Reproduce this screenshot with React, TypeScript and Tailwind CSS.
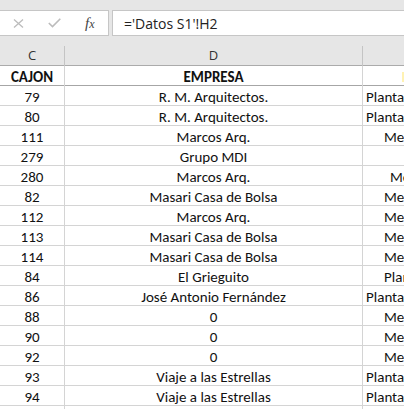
const rows: [string, string, string, string][] = [
  ['79', 'R. M. Arquitectos.', 'Planta', 'pl-[3px]'],
  ['80', 'R. M. Arquitectos.', 'Planta', 'pl-[3px]'],
  ['111', 'Marcos Arq.', 'Me', 'pl-[21px]'],
  ['279', 'Grupo MDI', '', 'pl-[21px]'],
  ['280', 'Marcos Arq.', 'Me', 'pl-[27px]'],
  ['82', 'Masari Casa de Bolsa', 'Me', 'pl-[21px]'],
  ['112', 'Marcos Arq.', 'Me', 'pl-[21px]'],
  ['113', 'Masari Casa de Bolsa', 'Me', 'pl-[21px]'],
  ['114', 'Masari Casa de Bolsa', 'Me', 'pl-[21px]'],
  ['84', 'El Grieguito', 'Plan', 'pl-[21px]'],
  ['86', 'José Antonio Fernández', 'Planta', 'pl-[3px]'],
  ['88', '0', 'Me', 'pl-[21px]'],
  ['90', '0', 'Me', 'pl-[21px]'],
  ['92', '0', 'Me', 'pl-[21px]'],
  ['93', 'Viaje a las Estrellas', 'Planta', 'pl-[3px]'],
  ['94', 'Viaje a las Estrellas', 'Planta', 'pl-[3px]'],
]

const cellFont = { fontFamily: 'Carlito, Lato, "Liberation Sans", sans-serif' }

export default function App() {
  return (
    <div className="w-[404px] h-[411px] overflow-hidden bg-white text-[#111]" style={cellFont}>
      {/* ── barra de fórmulas ── */}
      <div className="bg-[#e6e6e6] pt-[10px] pb-[10px] flex gap-[3px]">
        <div className="w-[109px] h-[26px] shrink-0 bg-white border border-l-0 border-[#c6c6c6] flex items-center">
          <svg width="11" height="9" viewBox="0 0 11 9" className="ml-[13px]">
            <path d="M1 0.5 L10 8.5 M10 0.5 L1 8.5" stroke="#bcbcbc" strokeWidth="1.3" fill="none" />
          </svg>
          <svg width="13" height="10" viewBox="0 0 13 10" className="ml-[24px]">
            <path d="M0.8 5 L4.5 8.6 L12.3 0.8" stroke="#bcbcbc" strokeWidth="1.6" fill="none" />
          </svg>
          <span
            className="ml-[24px] italic text-[15px] text-[#444] leading-none"
            style={{ fontFamily: '"Liberation Serif", serif' }}
          >
            f<span className="text-[12px]">x</span>
          </span>
        </div>
        <div className="flex-1 h-[26px] bg-white border border-r-0 border-[#c6c6c6] flex items-center pl-[11px]">
          <span className="text-[14px] text-[#222]" style={{ fontFamily: '"Open Sans", sans-serif' }}>
            ='Datos S1'!H2
          </span>
        </div>
      </div>

      {/* ── encabezados de columna ── */}
      <div
        className="grid grid-cols-[65px_298px_1fr] h-[20px] bg-[#e6e6e6] border-b border-[#ababab] text-[13px] text-[#333]"
        style={{ fontFamily: '"Open Sans", sans-serif' }}
      >
        <div className="border-r border-[#c4c4c4] flex items-center justify-center">C</div>
        <div className="border-r border-[#c4c4c4] flex items-center justify-center">D</div>
        <div />
      </div>

      {/* ── fila de títulos ── */}
      <div className="grid grid-cols-[65px_298px_1fr] h-[20px] border-b border-[#a6a6a6] text-[15px] font-bold">
        <div className="border-r border-[#d4d4d4] flex items-center justify-center">CAJON</div>
        <div className="border-r border-[#d4d4d4] flex items-center justify-center">EMPRESA</div>
        <div className="flex justify-end items-center">
          <span className="w-[2px] h-[10px] bg-[#fff2b3]" />
        </div>
      </div>

      {/* ── datos ── */}
      {rows.map(([cajon, empresa, e, pad], i) => (
        <div key={i} className="grid grid-cols-[65px_298px_1fr] h-[20px] border-b border-[#d4d4d4] text-[15px]">
          <div className="border-r border-[#d4d4d4] flex items-center justify-center">{cajon}</div>
          <div className="border-r border-[#d4d4d4] flex items-center justify-center whitespace-nowrap">{empresa}</div>
          <div className={`flex items-center whitespace-nowrap overflow-hidden ${pad}`}>{e}</div>
        </div>
      ))}
    </div>
  )
}
